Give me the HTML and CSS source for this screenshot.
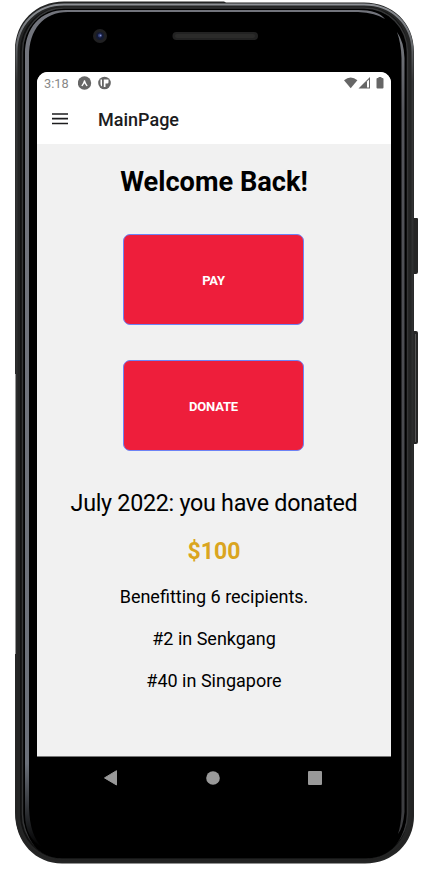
FILE: index.html
```html
<!DOCTYPE html>
<html lang="en">

<head>
    <meta charset="UTF-8">
    <title>MainPage</title>
    <link rel="stylesheet" href="styles.css">
</head>

<body>
    <div class="phone">
        <!-- phone shell -->
        <svg class="shell" width="421" height="874" viewBox="0 0 421 874" fill="none">
            <defs>
                <linearGradient id="topEdge" x1="0" y1="0" x2="0" y2="1">
                    <stop offset="0" stop-color="#8d9095" />
                    <stop offset="0.03" stop-color="#777a7e" />
                    <stop offset="0.09" stop-color="#343536" />
                    <stop offset="1" stop-color="#222" />
                </linearGradient>
                <linearGradient id="shine" x1="0" y1="0" x2="0" y2="1">
                    <stop offset="0" stop-color="#72747c" />
                    <stop offset="0.9" stop-color="#6b7079" />
                    <stop offset="1" stop-color="#000" />
                </linearGradient>
                <linearGradient id="shineRight" gradientUnits="userSpaceOnUse" x1="0" y1="32" x2="0" y2="835">
                    <stop offset="0" stop-color="#777a80" />
                    <stop offset="0.1" stop-color="#55565c" />
                    <stop offset="1" stop-color="#3c3d40" />
                </linearGradient>
            </defs>
            <path d="M413 218h4q1 0 1 1v53q0 2-2 2h-3z" fill="#262626" />
            <path d="M413 331h3q2 0 2 2v109q0 2-2 2h-3z" fill="#262626" />
            <path d="M415.500 334v108" stroke="#555" />
            <path d="M64 1.500H224L226 2.500H364C392 2.500 414 22 414 52V816C414 843 393 863.500 365 863.500H62C36 863.500 15 843 15 812V654H16V374H15V50C15 22 36 1.500 64 1.500Z" fill="#242525" />
            <path d="M64 4.500H364C392 4.500 412.500 24 412.500 52V814C412.500 841 391 860.500 364 860.500H64C37 860.500 16.500 841 16.500 814V52C16.500 24 37 4.500 64 4.500Z" stroke="url(#topEdge)" stroke-width="2" />
            <path d="M64 7H364C391 7 408 26 408 52V814C408 840 389 859 364 859H64C39 859 20 840 20 814V52C20 26 39 7 64 7Z" fill="#111" />
            <path d="M64 8H364C389 8 407.500 28 407.500 52V814C407.500 837 388 858 364 858H64C40 858 22.500 837 22.500 814V52C22.500 28 40 8 64 8Z" fill="#000" stroke="#353637" stroke-width="1.500" />
            <path d="M62 858.500H366C391 858.500 405 839 406 816V52C405 27 389 9.500 364 9.500H64C41 9.500 24 27 24 52V816C25 839 38 858.500 62 858.500Z" fill="#000" />
            <!-- reflections -->
            <path d="M25 814V54C25 28 40 10 66 10H358Q378 10 385 19Q376 13 358 12H68C43 12 29 30 29 56V808Q30 836 42 847Q25 838 25 814Z" fill="url(#shine)" />
            <path d="M397 32Q404 42 404.500 58V812Q403 828 398 834Q401 825 401.500 812V58Q401 43 397 32Z" fill="url(#shineRight)" />
            <circle cx="100" cy="36" r="7" fill="#202022" />
            <circle cx="100" cy="36" r="4" fill="#141a32" />
            <circle cx="100" cy="35.500" r="2" fill="#34417d" />
            <circle cx="100.500" cy="35.500" r="0.800" fill="#8a95c8" />
            <rect x="172.500" y="32" width="85.500" height="8" rx="4" fill="#222" />
            <rect x="175" y="34" width="80" height="4" rx="2" fill="#2b2b2a" />
        </svg>

        <div class="screen">
            <div class="status-bar">
                <span class="time">3:18</span>
                <svg class="notifications" width="34" height="14" viewBox="0 0 34 14">
                    <circle cx="6.500" cy="7" r="6.700" fill="#666" />
                    <path d="M3.300 9.800Q5.500 6.500 6 4.200H7Q7.500 6.500 9.700 9.800L8.500 10.200L6.500 7.200L4.500 10.200Z" fill="#fff" />
                    <circle cx="26.500" cy="7" r="6.300" fill="#666" />
                    <path d="M22.500 3.500H24V10.500Q22.500 9.500 22.500 8ZM25.800 3.500H30.500V6.300Q30.500 7.500 29.300 7.500H27.500V11H25.800Z" fill="#fff" />
                </svg>
                <svg class="signals" width="40" height="14" viewBox="0 0 40 14">
                    <path d="M0 4.300Q6.700-1.300 13.400 4.300L6.700 12.300Z" fill="#666" />
                    <path d="M26 1V12.500H14.500Z" fill="#666" />
                    <path d="M23 5.500L25 3.500V11.500H23Z" fill="#fff" />
                    <path d="M34.500 1H37.500V2H38.500Q39.500 2 39.500 3V11.500Q39.500 12.500 38.500 12.500H33.500Q32.500 12.500 32.500 11.500V3Q32.500 2 33.500 2H34.500Z" fill="#666" />
                </svg>
            </div>
            <div class="header">
                <svg class="menu" width="16" height="12" viewBox="0 0 16 12">
                    <path d="M0 1H16M0 5.700H16M0 10.500H16" stroke="#1c1c1e" stroke-width="1.700" />
                </svg>
                <span class="header-title">MainPage</span>
            </div>
            <div class="content">
                <h1>Welcome Back!</h1>
                <button class="btn">PAY</button>
                <button class="btn">DONATE</button>
                <p class="month">July 2022: you have donated</p>
                <p class="amount">$100</p>
                <p class="stat">Benefitting 6 recipients.</p>
                <p class="stat">#2 in Senkgang</p>
                <p class="stat">#40 in Singapore</p>
            </div>
        </div>

        <div class="nav-bar">
            <svg width="14" height="16" viewBox="0 0 14 16"><path d="M12.500 0.700V15L0.500 7.900Z" fill="#999" stroke="#999" stroke-linejoin="round" /></svg>
            <svg width="14" height="14" viewBox="0 0 14 14"><circle cx="7" cy="7" r="6.800" fill="#999" /></svg>
            <svg width="14" height="14" viewBox="0 0 14 14"><rect width="14" height="14" rx="1" fill="#999" /></svg>
        </div>
    </div>
</body>

</html>
```
FILE: styles.css
```css
body {
    margin: 0;
    background: #fff;
    font-family: Roboto, "Liberation Sans", sans-serif;
    color: #000;
}

.phone {
    position: relative;
    box-sizing: border-box;
    width: 421px;
    height: 874px;
    padding: 72px 30px 0 37px;
    overflow: hidden;
}

/* the shell lies under the screen */
.shell {
    position: absolute;
    top: 0;
    left: 0;
    z-index: -1;
}

.screen {
    box-sizing: border-box;
    width: 354px;
    height: 685px;
    background: #f1f1f1;
    border-bottom: 1px solid #777;
    border-radius: 11px 11px 0 0;
    overflow: hidden;
}

.status-bar {
    display: flex;
    align-items: center;
    height: 22px;
    padding: 0 7px;
    background: #fff;
}

.time {
    width: 34px;
    font-size: 12.8px;
    color: #888;
}

.signals {
    margin-left: auto;
}

.header {
    display: flex;
    align-items: center;
    height: 50px;
    padding-left: 15px;
    background: #fff;
}

.header-title {
    margin-left: 30px;
    padding-top: 1px;
    font-size: 18px;
    font-weight: 500;
    color: #1c1c1e;
}

.content {
    display: flex;
    flex-direction: column;
    align-items: center;
}

.content h1 {
    margin: 20px 0 34px;
    font-size: 27.2px;
    line-height: 36px;
    font-weight: bold;
}

.btn {
    width: 181px;
    height: 91px;
    margin: 0 1px 35px 0;
    padding: 1px 0 0;
    background: #ee1e3b;
    border: 1px solid #6d83f5;
    border-radius: 7px;
    font-family: inherit;
    font-size: 13px;
    letter-spacing: -0.2px;
    font-weight: bold;
    color: #fff;
}

.content p {
    margin: 0;
    white-space: nowrap;
}

.content .month {
    font-size: 23.3px;
    line-height: 34px;
    letter-spacing: -0.28px;
}

.content .amount {
    margin: 17px 0 15px;
    font-size: 23px;
    line-height: 30px;
    font-weight: bold;
    color: #daa520;
}

.content .stat {
    margin-bottom: 12px;
    font-size: 18px;
    line-height: 30px;
}

.nav-bar {
    display: flex;
    align-items: center;
    justify-content: space-between;
    height: 42px;
    padding: 0 69px 0 67px;
}
```
